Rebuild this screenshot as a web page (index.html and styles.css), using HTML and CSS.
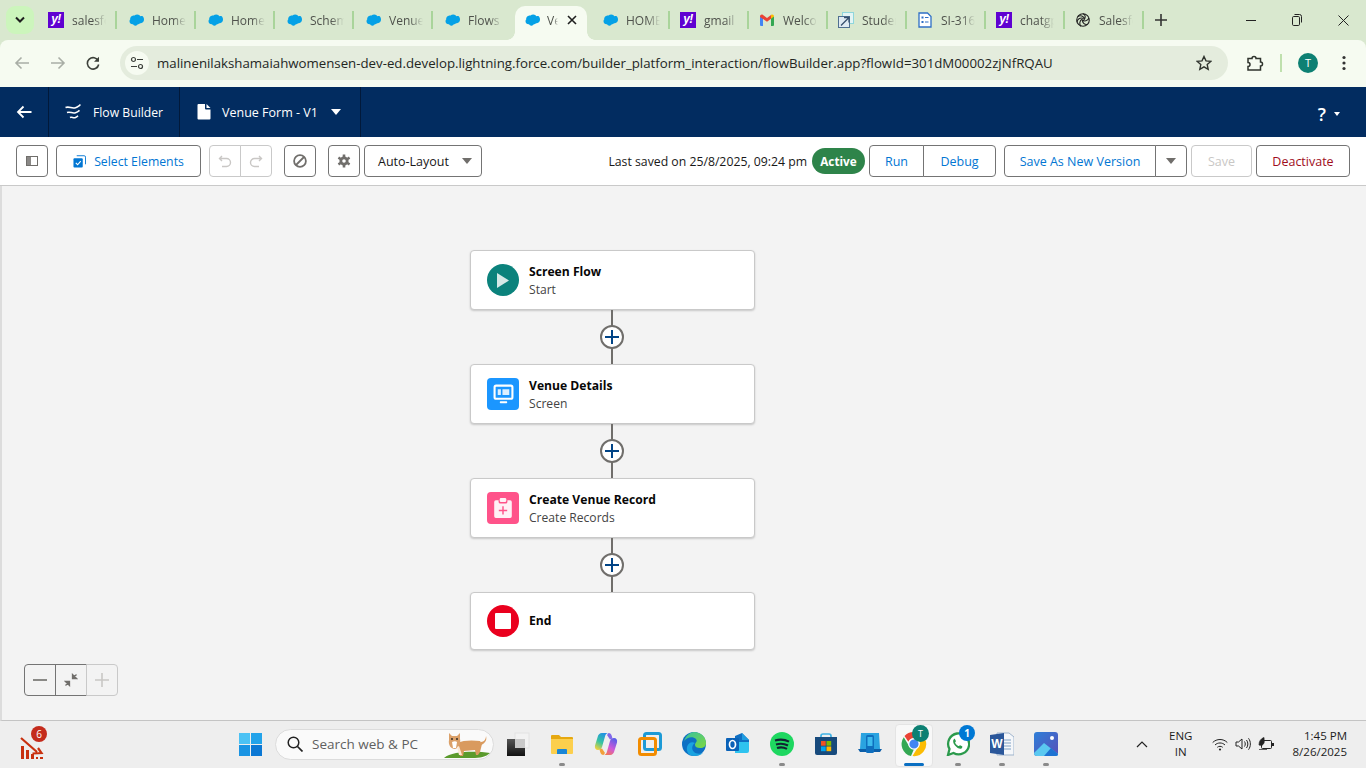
FILE: index.html
```html
<!DOCTYPE html>
<html lang="en">
<head>
<meta charset="utf-8">
<title>Flow Builder</title>
<link rel="stylesheet" href="styles.css">
</head>
<body>
<svg class="defs" width="0" height="0" aria-hidden="true">
  <symbol id="cloud" viewBox="0 0 16 12">
    <path fill="#05a1e6" d="M6.5 1.6C7.2.8 8.200.4 9.300.4c1.400 0 2.600.8 3.200 1.900.5-.2 1-.3 1.500-.3C15.200 2 16 4 16 5.600c0 2-1.200 3.600-3.200 3.600h-.8c-.5.800-1.400 1.200-2.200 1.100-.5 1-1.500 1.500-2.500 1.400-1 0-1.800-.6-2.300-1.400-1.800.2-3.500-1-3.500-3 0-.9.300-1.500.8-2C1.800 3.800 3.500 1.300 6.500 1.600z"/>
  </symbol>
  <symbol id="plus" viewBox="0 0 24 24">
    <circle cx="12" cy="12" r="11" fill="#fff" stroke="#706e6b" stroke-width="2"/>
    <path d="M12 5v14M5 12h14" stroke="#014486" stroke-width="2" fill="none"/>
  </symbol>
</svg>

<header class="tabstrip">
  <div class="tab-search"><svg width="12" height="8" viewBox="0 0 12 8"><path d="M2 1.500l4 4 4-4" fill="none" stroke="#1f1f1f" stroke-width="2"/></svg></div>
  <div class="tab"><span class="yahoo">y!</span><span class="tab-label">salesfo</span></div>
  <div class="tab"><svg class="fav cloud"><use href="#cloud"/></svg><span class="tab-label">Home</span></div>
  <div class="tab"><svg class="fav cloud"><use href="#cloud"/></svg><span class="tab-label">Home</span></div>
  <div class="tab"><svg class="fav cloud"><use href="#cloud"/></svg><span class="tab-label">Schem</span></div>
  <div class="tab"><svg class="fav cloud"><use href="#cloud"/></svg><span class="tab-label">Venue</span></div>
  <div class="tab no-sep"><svg class="fav cloud"><use href="#cloud"/></svg><span class="tab-label">Flows</span></div>
  <div class="tab active"><svg class="fav"><use href="#cloud"/></svg><span class="tab-label short">Ve</span>
    <svg class="tab-close" width="10" height="10" viewBox="0 0 10 10"><path d="M1 1l8 8M9 1l-8 8" stroke="#1f1f1f" stroke-width="1.600"/></svg></div>
  <div class="tab"><svg class="fav cloud"><use href="#cloud"/></svg><span class="tab-label">HOME</span></div>
  <div class="tab"><span class="yahoo">y!</span><span class="tab-label">gmail</span></div>
  <div class="tab">
    <svg class="fav" viewBox="0 0 16 16"><path fill="#4285f4" d="M1 4.500h3V14H2a1 1 0 0 1-1-1z"/><path fill="#34a853" d="M12 4.500h3V13a1 1 0 0 1-1 1h-2z"/><path fill="#ea4335" d="M1 4.500C1 3 2.500 2 3.700 2.800L8 6l4-3v3.800L8 9.800 1 5z"/><path fill="#fbbc04" d="M12 3l.6-.4C13.700 2 15 3 15 4.500L12 6.800z"/></svg>
    <span class="tab-label">Welco</span></div>
  <div class="tab">
    <svg class="fav" viewBox="0 0 16 16"><rect x="4.500" y=".5" width="11" height="11" fill="#e4f4f4" stroke="#8fd6dc"/><rect x=".5" y="4.500" width="11" height="11" fill="#dfeaf2" stroke="#4f6f90"/><path d="M3 13.500L11 5.500M6 5.500h5v5" fill="none" stroke="#36506e" stroke-width="1.300"/></svg>
    <span class="tab-label">Studer</span></div>
  <div class="tab">
    <svg class="fav" viewBox="0 0 16 16"><path d="M2 1h8.500L14 4.500V15H2z" fill="#fff" stroke="#2f6fc6" stroke-width="1.300"/><path d="M4.500 4.500h2v2h-2zM4.500 9h2v2h-2z" fill="#2f6fc6"/><path d="M8 5.500h3.500M8 10h3.500" stroke="#2f6fc6" stroke-width="1.200"/></svg>
    <span class="tab-label">SI-316</span></div>
  <div class="tab"><span class="yahoo">y!</span><span class="tab-label">chatgp</span></div>
  <div class="tab">
    <svg class="fav" viewBox="0 0 16 16"><g fill="none" stroke="#222" stroke-width="1.100"><circle cx="8" cy="8" r="6.300"/><path d="M8 1.700c3 1 3 5 0 7.300M14 6c-1 3-5 4-7 1.500M12.500 12.500c-3 .5-5.500-2-5-5M6 14.300c-2-2-1.500-5.500 1-7M2 10c.5-3 3.500-5 6.500-3.500M2.800 4.500c2.500-1.500 6-.5 6.700 2.500"/></g></svg>
    <span class="tab-label">Salesfo</span></div>
  <svg class="new-tab" width="12" height="12" viewBox="0 0 12 12"><path d="M6 0v12M0 6h12" stroke="#333" stroke-width="1.600"/></svg>
  <div class="win-controls">
    <span class="win-btn"><svg width="10" height="10" viewBox="0 0 10 10"><path d="M0 5.500h10" stroke="#222"/></svg></span>
    <span class="win-btn"><svg width="10" height="12" viewBox="0 0 10 12"><path d="M2.500.5h5a2 2 0 0 1 2 2v6" fill="none" stroke="#222"/><rect x=".5" y="2.500" width="7" height="9" rx="1.200" fill="none" stroke="#222"/></svg></span>
    <span class="win-btn"><svg width="11" height="11" viewBox="0 0 11 11"><path d="M.5.500l10 10M10.500.500l-10 10" stroke="#222"/></svg></span>
  </div>
</header>

<nav class="omnibar">
  <svg class="nav-ic" width="16" height="14" viewBox="0 0 16 14"><path d="M15 7H2M7.500 1.500L2 7l5.500 5.500" fill="none" stroke="#a9aea6" stroke-width="1.600"/></svg>
  <svg class="nav-ic" width="16" height="14" viewBox="0 0 16 14"><path d="M1 7h13M8.500 1.500L14 7l-5.500 5.500" fill="none" stroke="#a9aea6" stroke-width="1.600"/></svg>
  <svg class="nav-ic" width="14" height="14" viewBox="0 0 14 14"><path d="M12.300 5A5.700 5.700 0 1 0 12.700 8.500" fill="none" stroke="#3c403a" stroke-width="1.600"/><path d="M13 .8v5H8" fill="#3c403a"/></svg>
  <div class="urlbar">
    <span class="site-ic"><svg width="14" height="14" viewBox="0 0 14 14"><g fill="none" stroke="#3c403a" stroke-width="1.200"><circle cx="3.500" cy="3.500" r="2"/><path d="M7 3.500h6M1 10.500h6"/><circle cx="10.500" cy="10.500" r="2"/></g></svg></span>
    <span class="url">malinenilakshamaiahwomensen-dev-ed.develop.lightning.force.com/builder_platform_interaction/flowBuilder.app?flowId=301dM00002zjNfRQAU</span>
    <svg class="star" width="16" height="16" viewBox="0 0 16 16"><path d="M8 1.500l2 4.400 4.800.500-3.600 3.200 1 4.700L8 11.900l-4.200 2.400 1-4.700L1.200 6.400 6 5.900z" fill="none" stroke="#2f332d" stroke-width="1.400"/></svg>
  </div>
  <svg class="ext" width="18" height="18" viewBox="0 0 18 18"><path d="M2 4.500h4a2 2 0 0 1 4 0h4.500V8a2 2 0 0 1 0 4v4H2v-3.500a2 2 0 0 0 0-4z" fill="none" stroke="#2f332d" stroke-width="1.500"/></svg>
  <span class="omni-sep"></span>
  <span class="avatar">T</span>
  <svg class="menu-dots" width="4" height="16" viewBox="0 0 4 16"><circle cx="2" cy="2.500" r="1.600" fill="#333"/><circle cx="2" cy="8" r="1.600" fill="#333"/><circle cx="2" cy="13.500" r="1.600" fill="#333"/></svg>
</nav>

<section class="appbar">
  <div class="app-cell back"><svg width="16" height="14" viewBox="0 0 16 14"><path d="M15.500 7H2M7.500 1.500L2 7l5.500 5.500" fill="none" stroke="#fff" stroke-width="1.800"/></svg></div>
  <div class="app-cell builder">
    <svg width="16" height="16" viewBox="0 0 16 16"><path d="M.5 3.500c4-1.500 6 1.500 10 .2 2-.6 3.500-2 5-3M2 8.500c3.500-1.300 5 1.300 8.500.2 1.700-.5 3-1.500 4-2.400M5 13.500c2-1 3.300 1 5.500 0 1-.4 1.700-1 2.500-1.800" fill="none" stroke="#fff" stroke-width="1.600"/></svg>
    <span>Flow Builder</span>
  </div>
  <div class="app-cell doc">
    <svg width="14" height="16" viewBox="0 0 14 16"><path d="M1.500 0H8v4.500a1 1 0 0 0 1 1h4.500v9a1 1 0 0 1-1 1h-11a1 1 0 0 1-1-1V1a1 1 0 0 1 1-1zM9.500 0l4 4h-4z" fill="#fff"/></svg>
    <span>Venue Form - V1</span>
    <i class="caret white"></i>
  </div>
  <div class="help"><span class="q">?</span><i class="mini-caret"></i></div>
</section>

<section class="toolbar">
  <button class="btn icon"><svg width="12" height="10" viewBox="0 0 12 10"><rect x=".5" y=".5" width="11" height="9" fill="#fff" stroke="#706e6b"/><rect x="1" y="1" width="4" height="8" fill="#8a8886"/></svg></button>
  <button class="btn select">
    <svg width="13" height="13" viewBox="0 0 14 14"><path d="M4 .8h8a1.500 1.500 0 0 1 1.500 1.500v7.700" fill="none" stroke="#0176d3"/><rect x=".5" y="3.500" width="10" height="10" rx="1" fill="#0176d3"/><path d="M3 8.500l2 2 3.300-3.800" fill="none" stroke="#fff" stroke-width="1.200"/></svg>
    <span>Select Elements</span>
  </button>
  <div class="group undo">
    <button class="btn icon wide disabled"><svg width="14" height="14" viewBox="0 0 14 14"><path d="M4 2L1.500 4.500 4 7M2 4.500h6.500a4 4 0 0 1 0 8H4" fill="none" stroke="#c9c7c5" stroke-width="1.400"/></svg></button>
    <button class="btn icon wide disabled"><svg width="14" height="14" viewBox="0 0 14 14"><path d="M10 2l2.500 2.500L10 7M12 4.500H5.500a4 4 0 0 0 0 8H10" fill="none" stroke="#c9c7c5" stroke-width="1.400"/></svg></button>
  </div>
  <button class="btn icon stop"><svg width="14" height="14" viewBox="0 0 14 14"><circle cx="7" cy="7" r="5.900" fill="none" stroke="#706e6b" stroke-width="1.800"/><path d="M3 11l8-8" stroke="#706e6b" stroke-width="1.800"/></svg></button>
  <button class="btn icon gear"><svg width="14" height="14" viewBox="0 0 14 14"><circle cx="7" cy="7" r="3.200" fill="none" stroke="#706e6b" stroke-width="2.800"/><path d="M7 .5v2.500M7 11v2.500M1.400 3.700l2.200 1.300M10.400 9l2.200 1.300M1.400 10.300L3.600 9M10.400 5l2.200-1.300" stroke="#706e6b" stroke-width="2.600"/></svg></button>
  <button class="btn layout"><span>Auto-Layout</span><i class="caret grey"></i></button>
  <span class="saved">Last saved on 25/8/2025, 09:24 pm</span>
  <span class="status">Active</span>
  <div class="group run">
    <button class="btn brand run-b">Run</button>
    <button class="btn brand debug-b">Debug</button>
  </div>
  <div class="group saveas">
    <button class="btn brand saveas-b">Save As New Version</button>
    <button class="btn saveas-c"><i class="caret grey"></i></button>
  </div>
  <button class="btn disabled save-b">Save</button>
  <button class="btn deactivate">Deactivate</button>
</section>

<main class="canvas">
  <div class="flow">
    <article class="node">
      <span class="node-ic circle teal"><svg width="12" height="15" viewBox="0 0 12 15"><path d="M0 0l12 7.500L0 15z" fill="#d5e9e7"/></svg></span>
      <div><h3>Screen Flow</h3><p>Start</p></div>
    </article>
    <div class="link"><svg class="plus"><use href="#plus"/></svg></div>
    <article class="node">
      <span class="node-ic square blue"><svg width="21" height="21" viewBox="0 0 20 20"><rect x="1.500" y="1.500" width="17" height="12.500" rx="1.500" fill="none" stroke="#fff" stroke-width="2"/><path d="M4.500 5h3v5.500h-3zM9 5h6.500v5.500H9z" fill="#fff" opacity=".85"/><rect x="6.500" y="16.500" width="7" height="1.800" rx=".6" fill="#fff"/></svg></span>
      <div><h3>Venue Details</h3><p>Screen</p></div>
    </article>
    <div class="link"><svg class="plus"><use href="#plus"/></svg></div>
    <article class="node">
      <span class="node-ic square pink"><svg width="22" height="22" viewBox="0 0 20 20"><path d="M3.500 3H6v1.500a1.500 1.500 0 0 0 1.500 1.500h5A1.500 1.500 0 0 0 14 4.500V3h2.500A1.500 1.500 0 0 1 18 4.500v13a1.500 1.500 0 0 1-1.500 1.500h-13A1.500 1.500 0 0 1 2 17.500v-13A1.500 1.500 0 0 1 3.500 3z" fill="#fff" opacity=".92"/><rect x="7" y="1" width="6" height="3.500" rx="1.200" fill="#fff" opacity=".92"/><path d="M10 8.500v7.500M6.200 12.200h7.600" stroke="#ff538a" stroke-width="1.300"/></svg></span>
      <div><h3>Create Venue Record</h3><p>Create Records</p></div>
    </article>
    <div class="link"><svg class="plus"><use href="#plus"/></svg></div>
    <article class="node end">
      <span class="node-ic circle red"><span class="end-sq"></span></span>
      <div><h3>End</h3></div>
    </article>
  </div>
  <div class="zoom">
    <button class="z-btn"><svg width="14" height="2" viewBox="0 0 14 2"><path d="M0 1h14" stroke="#706e6b" stroke-width="1.600"/></svg></button>
    <button class="z-btn"><svg width="14" height="14" viewBox="0 0 14 14"><path d="M12.500 1.500L9 5M8.500 1.500v4h4z" fill="#706e6b" stroke="#706e6b" stroke-width="1.300"/><path d="M1.500 12.500L5 9M5.500 12.500v-4h-4z" fill="#706e6b" stroke="#706e6b" stroke-width="1.300"/></svg></button>
    <button class="z-btn off"><svg width="14" height="14" viewBox="0 0 14 14"><path d="M7 0v14M0 7h14" stroke="#c9c7c5" stroke-width="1.600"/></svg></button>
  </div>
</main>

<footer class="taskbar">
  <div class="widget">
    <svg width="24" height="24" viewBox="0 0 24 24"><path d="M1 11v13h3V11zM6 15v9h3v-9zM11 19v5h3v-5zM16 22v2h2v-2zM20 22v2h3v-2z" fill="#c8300f"/><path d="M1 3l16 14M12.500 18.500l9-.5-3.500-5" fill="none" stroke="#c8300f" stroke-width="2.200"/></svg>
    <span class="widget-badge">6</span>
  </div>
  <svg class="start" width="23" height="23" viewBox="0 0 23 23"><rect width="11" height="11" fill="#4cc2f4"/><rect x="12" width="11" height="11" fill="#22a3ea"/><rect y="12" width="11" height="11" fill="#1a94e3"/><rect x="12" y="12" width="11" height="11" fill="#0b78d4"/></svg>
  <div class="search">
    <svg width="16" height="16" viewBox="0 0 16 16"><circle cx="6.500" cy="6.500" r="5.300" fill="none" stroke="#222" stroke-width="1.500"/><path d="M10.500 10.500l5 5" stroke="#222" stroke-width="1.700"/></svg>
    <span>Search web &amp; PC</span>
    <svg class="dog" width="48" height="28" viewBox="0 0 48 28"><path d="M1 27c8-7 32-7 46-5-4 4-10 5-18 5z" fill="#5a9a2c"/><path d="M14 12c6-3 16-3 23-2l2 3-2 8-2 3h-2l-1-5-11 1-1 5h-3l-1-6z" fill="#d99a5e"/><path d="M38 11c3 0 5-3 5-6 1 3 0 7-5 9z" fill="#d99a5e"/><path d="M6 2l3 3h5l3-3 0 6c1 4-1 9-5 10-4 0-7-4-6-9z" fill="#dba16a"/><path d="M9 11c2-1 4-1 5 0l-1 6h-3z" fill="#fff"/><circle cx="9" cy="8" r=".9" fill="#222"/><circle cx="14" cy="8" r=".9" fill="#222"/><path d="M16 15l3 9h-3l-2-8z" fill="#fbe9d6"/></svg>
  </div>
  <div class="apps">
    <span class="app"><svg width="24" height="24" viewBox="0 0 24 24"><defs><linearGradient id="bk" x1="0" y1="0" x2="0" y2="1"><stop offset="0" stop-color="#555"/><stop offset="1" stop-color="#111"/></linearGradient></defs><rect x="9" y="1" width="14" height="15" fill="#f2f2f2" stroke="#e2e2e2"/><rect x="1" y="7" width="18" height="17" fill="url(#bk)"/><rect x="9" y="7" width="10" height="9" fill="#c8c8c8"/></svg></span>
    <span class="app dot"><svg width="24" height="24" viewBox="0 0 24 24"><path d="M1 4a1 1 0 0 1 1-1h7l2 2h11a1 1 0 0 1 1 1v2H1z" fill="#e6a810"/><path d="M1 7h22v14a1 1 0 0 1-1 1H2a1 1 0 0 1-1-1z" fill="#fccf4d"/><path d="M8 17h8a1 1 0 0 1 1 1v4H7v-4a1 1 0 0 1 1-1z" fill="#1a86d6"/></svg></span>
    <span class="app"><svg width="24" height="24" viewBox="0 0 24 24"><defs><linearGradient id="cl" x1="0.700" y1="0" x2="0.200" y2="1"><stop offset="0" stop-color="#1f8fe8"/><stop offset=".55" stop-color="#37c4a0"/><stop offset="1" stop-color="#f6d23a"/></linearGradient><linearGradient id="cr" x1="0.700" y1="0" x2="0.200" y2="1"><stop offset="0" stop-color="#5a5ee8"/><stop offset=".55" stop-color="#d05ad8"/><stop offset="1" stop-color="#f5784a"/></linearGradient></defs><path d="M8 1h6.500c-2 0-3 1.500-3.500 3.500L8 15c-.6 2-2 3-4 3-2.300 0-3.600-2-3-4.500l2.500-8C4.200 2.700 5.500 1 8 1z" fill="url(#cl)"/><path d="M16 23H9.500c2 0 3-1.500 3.500-3.500L16 9c.6-2 2-3 4-3 2.300 0 3.600 2 3 4.500l-2.500 8C19.800 21.300 18.500 23 16 23z" fill="url(#cr)"/><path d="M14.500 1c1.800 0 2.800 1 3.300 3l.7 2.500-2.500 1L13 3z" fill="#8268ea"/><path d="M9.500 23c-1.800 0-2.800-1-3.300-3l-.7-2.500 2.500-1L11 21z" fill="#f2a03a"/></svg></span>
    <span class="app"><svg width="24" height="24" viewBox="0 0 24 24"><rect x="6.500" y="1.500" width="16" height="16" rx="2" fill="none" stroke="#1c9ad6" stroke-width="3"/><rect x="1.500" y="6.500" width="16" height="16" rx="2" fill="none" stroke="#f28c00" stroke-width="3"/></svg></span>
    <span class="app"><svg width="24" height="24" viewBox="0 0 24 24"><defs><linearGradient id="ed" x1="0" y1="0" x2="1" y2="1"><stop offset="0" stop-color="#35c1a0"/><stop offset="1" stop-color="#7fd83f"/></linearGradient></defs><circle cx="12" cy="12" r="12" fill="#0d70c4"/><path d="M2 9C4 3 9 0 12 0c7 0 12 5 12 11 0 3-2 5-6 5-3 0-5-1-5-3 0-3 3-3 1-6-3-3-9-2-12 2z" fill="url(#ed)"/><path d="M12 24c-5 0-8-4-7-9 1-4 5-6 8-4-3 2-4 6-1 9 2 2 6 2 9 1-2 2-5 3-9 3z" fill="#1aa3e0"/></svg></span>
    <span class="app"><svg width="24" height="24" viewBox="0 0 24 24"><path d="M9 4l7-3 7 7v9l-3 4H9z" fill="#0f6fc2"/><path d="M9 10h14v9a2 2 0 0 1-2 2H9z" fill="#2ec3ef"/><path d="M16 1l7 7h-7z" fill="#1f9ce0"/><rect x="0" y="6" width="13" height="13" rx="1" fill="#0a62b8"/><ellipse cx="6.500" cy="12.500" rx="3" ry="4" fill="none" stroke="#fff" stroke-width="1.700"/></svg></span>
    <span class="app dot"><svg width="24" height="24" viewBox="0 0 24 24"><circle cx="12" cy="12" r="12" fill="#1ed760"/><path d="M5 8.500c5-1.500 10-1 14 1.200M6 12.500c4-1.200 8.500-.8 12 1M7 16c3-1 7-.7 10 .9" fill="none" stroke="#123" stroke-width="2.100"/></svg></span>
    <span class="app"><svg width="24" height="24" viewBox="0 0 24 24"><path d="M7 6V4a2 2 0 0 1 2-2h6a2 2 0 0 1 2 2v2" fill="none" stroke="#3eb2e5" stroke-width="1.700"/><path d="M1 5h22v16a2 2 0 0 1-2 2H3a2 2 0 0 1-2-2z" fill="#174a7c"/><rect x="7" y="9" width="4.700" height="4.700" fill="#f25022"/><rect x="12.500" y="9" width="4.700" height="4.700" fill="#7fba00"/><rect x="7" y="14.500" width="4.700" height="4.700" fill="#00a4ef"/><rect x="12.500" y="14.500" width="4.700" height="4.700" fill="#ffb900"/></svg></span>
    <span class="app"><svg width="24" height="24" viewBox="0 0 24 24"><path d="M3 1h18l1 16H2z" fill="#2aa3e0"/><path d="M0 17h24l-2 3H2z" fill="#0c5ea8"/><rect x="8" y="3" width="8" height="18" rx="1.500" fill="#0f6fbe"/><rect x="9.500" y="5" width="5" height="9" fill="#3dbbee"/></svg></span>
    <span class="app current"><svg width="26" height="26" viewBox="0 0 26 26"><path d="M13 1a12 12 0 0 1 10.400 6H13a6 6 0 0 0-5.600 3.700L3.500 5A12 12 0 0 1 13 1z" fill="#ea4335"/><path d="M2.800 6.300L8 15a6 6 0 0 0 5 3l-3 7A12 12 0 0 1 2.800 6.300z" fill="#34a853"/><path d="M24 8a12 12 0 0 1-12.500 17L17 16a6 6 0 0 0 .5-8z" fill="#fbbc04"/><circle cx="13" cy="13" r="5.200" fill="#4285f4" stroke="#fff" stroke-width="1.200"/></svg><span class="t-badge">T</span><span class="run-bar"></span></span>
    <span class="app dot"><svg width="24" height="24" viewBox="0 0 24 24"><path d="M2 23l1.500-6A10.500 10.500 0 1 1 7.500 21z" fill="#fff" stroke="#2b9a4c" stroke-width="2.300"/><path d="M8 7c-1.500 1.500-1 4 1 6.500s5 4 6.500 3c1-1 1-2 .6-2.300l-2-1c-.5-.2-1 .8-1.500.8-1 0-3.500-2.500-3.500-3.500 0-.5 1-1 .8-1.500l-1-2C8.700 6.500 8.400 6.600 8 7z" fill="#2b9a4c"/></svg><span class="wa-badge">1</span></span>
    <span class="app dot"><svg width="24" height="24" viewBox="0 0 24 24"><path d="M7 1h12l5 4v18H7z" fill="#f5f7fa" stroke="#9fb4cc"/><path d="M14 8h7M14 11h7M14 14h7M14 17h7" stroke="#7fa0c4"/><path d="M0 3l14-2v22L0 21z" fill="#2b579a"/><text class="word-w" x="7" y="16" text-anchor="middle">W</text></svg></span>
    <span class="app dot"><svg width="24" height="24" viewBox="0 0 24 24"><defs><linearGradient id="ph" x1="0" y1="0" x2="1" y2="1"><stop offset="0" stop-color="#2d7fd8"/><stop offset="1" stop-color="#5a4fb8"/></linearGradient></defs><rect width="24" height="24" rx="3" fill="url(#ph)"/><circle cx="18" cy="6" r="2" fill="#fff"/><path d="M0 21l10-10 14 11a2 2 0 0 1-2 2H3a3 3 0 0 1-3-3z" fill="#5ac8f0"/><path d="M10 24l7-8 7 6a2 2 0 0 1-2 2z" fill="#1d72d2"/></svg></span>
  </div>
  <div class="tray">
    <svg class="chev" width="12" height="7" viewBox="0 0 12 7"><path d="M1 6l5-5 5 5" fill="none" stroke="#222" stroke-width="1.200"/></svg>
    <div class="lang"><span>ENG</span><span>IN</span></div>
    <svg width="16" height="13" viewBox="0 0 16 13"><g fill="none" stroke="#222"><path d="M.7 4.500C4.700.5 11.300.5 15.300 4.500M3 7c2.700-2.700 7.300-2.700 10 0M5.300 9.300c1.500-1.300 3.900-1.300 5.400 0"/></g><circle cx="8" cy="11.500" r="1.100" fill="#222"/></svg>
    <svg width="16" height="14" viewBox="0 0 16 14"><g fill="none" stroke="#222"><path d="M1 5h2.500L7 2v10L3.500 9H1zM9.500 4.500c1 1.500 1 3.500 0 5M11.500 3c1.800 2.300 1.800 5.700 0 8M13.500 1.300c2.500 3.300 2.500 8 0 11.400"/></g></svg>
    <svg width="17" height="14" viewBox="0 0 17 14"><rect x="3.500" y="3.500" width="10" height="8" rx="1" fill="none" stroke="#222"/><path d="M14 6h2v3h-2z" fill="#222"/><path d="M1 8c0-4 2-6.500 5-7.500 0 3 1 5-1 7-1 1-2 1-4 .5zM1 12.500h8" fill="#222" stroke="#222" stroke-width=".7"/></svg>
    <div class="clock"><span>1:45 PM</span><span>8/26/2025</span></div>
  </div>
</footer>
</body>
</html>
```
FILE: styles.css
```css
* { box-sizing: border-box; }
html, body { margin: 0; padding: 0; }
body {
  width: 1366px; height: 768px; overflow: hidden;
  display: flex; flex-direction: column;
  font-family: "Open Sans", "Noto Sans", sans-serif;
  background: #d9e8cf;
}
.defs { position: absolute; }
button { font: inherit; background: #fff; padding: 0; }

/* Browser tabs */
.tabstrip {
  height: 40px; flex: none; display: flex; align-items: center;
  background: #d9e8cf; padding-left: 6px;
}
.tab-search {
  width: 28px; height: 28px; margin-right: 4px; flex: none;
  background: #ccf5bc; border-radius: 9px;
  display: flex; align-items: center; justify-content: center;
}
.tab {
  width: 79px; height: 40px; flex: none; padding: 0 0 0 10px;
  display: flex; align-items: center; gap: 8px; position: relative;
}
.tab::after {
  content: ""; position: absolute; right: 0; top: 11px; width: 2px; height: 18px; background: #a9d49a;
}
.tab.no-sep::after { display: none; }
.tab.active {
  background: #f6fbf1; border-radius: 10px 10px 0 0; margin-top: 6px; height: 34px;
  padding: 0 0 6px 9px; gap: 7px; width: 72px; margin-left: 3px; margin-right: 4px;
}
.tab.active::before, .tab.active::after {
  content: ""; position: absolute; bottom: 0; top: auto; width: 8px; height: 8px;
}
.tab.active::before { left: -8px; background: radial-gradient(circle at 0 0, transparent 7.500px, #f6fbf1 8px); }
.tab.active::after { right: -8px; background: radial-gradient(circle at 100% 0, transparent 7.500px, #f6fbf1 8px); }
.fav { width: 16px; height: 16px; flex: none; }
.fav.cloud { height: 12px; margin-left: 1px; }
.tab.active .fav { height: 12px; }
.yahoo {
  width: 16px; height: 16px; flex: none; background: #5f01d1; color: #fff;
  font: italic bold 12px/15px "Liberation Sans", sans-serif; text-align: center; letter-spacing: -.5px;
}
.tab-label {
  width: 34px; font-size: 12px; color: #4f524c; white-space: nowrap;
  -webkit-mask-image: linear-gradient(90deg, #000 62%, transparent);
  mask-image: linear-gradient(90deg, #000 62%, transparent);
}
.tab-label.short { width: 11px; }
.tab-close { position: absolute; left: 52px; top: 9px; }
.new-tab { margin-left: 11px; flex: none; }
.win-controls { margin-left: auto; width: 138px; flex: none; display: flex; }
.win-btn { width: 46px; display: flex; align-items: center; justify-content: center; }

/* Address row */
.omnibar {
  height: 47px; flex: none; background: #f6fbf1; display: flex; align-items: center;
  padding: 0 0 1px 14px; border-radius: 8px 8px 0 0;
}
.nav-ic { margin-right: 20px; flex: none; }
.urlbar {
  width: 1108px; height: 34px; background: #e4ecdd; border-radius: 17px;
  display: flex; align-items: center; padding-left: 5px; flex: none;
}
.site-ic {
  width: 24px; height: 24px; border-radius: 50%; background: #f6fbf1;
  display: flex; align-items: center; justify-content: center; flex: none;
}
.url { margin-left: 8px; font-size: 13.260px; color: #23261f; white-space: nowrap; flex: none; }
.star { margin-left: auto; margin-right: 16px; }
.ext { margin-left: 18px; flex: none; }
.omni-sep { width: 2px; height: 18px; background: #bfe0ae; margin-left: 16px; flex: none; }
.avatar {
  width: 20px; height: 20px; border-radius: 50%; background: #0d8073; color: #fff; flex: none;
  font-size: 11px; line-height: 20px; text-align: center; margin-left: 16px;
}
.menu-dots { margin-left: 24px; flex: none; }

/* Flow Builder header */
.appbar {
  height: 50px; flex: none; background: #022c60; color: #fff; display: flex; align-items: stretch;
  font-size: 12.500px;
}
.app-cell {
  display: flex; align-items: center; border-right: 1px solid #01193a; flex: none;
}
.back { width: 49px; padding-left: 16px; }
.builder { width: 131px; padding-left: 16px; gap: 12px; font-size: 12.200px; }
.doc { width: 181px; padding-left: 17px; gap: 11px; }
.caret { width: 0; height: 0; border: 5.500px solid transparent; border-bottom: 0; border-top-width: 6px; }
.caret.white { border-top-color: #fff; margin-left: 2px; }
.caret.grey { border-top-color: #706e6b; }
.help { margin-left: auto; display: flex; align-items: center; padding: 4px 26px 0 0; gap: 8px; }
.q { font-size: 18px; font-weight: 600; }
.mini-caret { width: 0; height: 0; border: 3px solid transparent; border-top: 4px solid #fff; border-bottom: 0; }

/* Builder toolbar */
.toolbar {
  height: 49px; flex: none; background: #fff; border-bottom: 1px solid #c9c9c9;
  display: flex; align-items: center; padding: 0 16px; font-size: 12.500px;
}
.btn {
  height: 32px; border: 1px solid #747474; border-radius: 4px; color: #181818;
  display: flex; align-items: center; justify-content: center; flex: none;
}
.btn.icon { width: 32px; }
.btn.select { width: 145px; margin-left: 8px; gap: 8px; color: #0176d3; font-size: 12.250px; }
.group { display: flex; flex: none; }
.group .btn + .btn { margin-left: -1px; border-top-left-radius: 0; border-bottom-left-radius: 0; }
.group .btn:first-child { border-top-right-radius: 0; border-bottom-right-radius: 0; }
.undo { margin-left: 8px; }
.btn.wide { width: 32px; }
.btn.disabled { border-color: #c9c9c9; color: #c9c7c5; }
.btn.stop { margin-left: 12px; }
.btn.gear { margin-left: 12px; }
.btn.layout { width: 118px; margin-left: 4px; justify-content: space-between; padding: 0 9px 0 13px; }
.saved { margin-left: auto; color: #181818; white-space: nowrap; font-size: 12.250px; }
.status {
  width: 53px; height: 26px; border-radius: 13px; background: #2e844a; color: #fff;
  font-weight: 700; font-size: 11.750px; text-align: center; line-height: 26px; margin-left: 5px; flex: none;
}
.brand { color: #0176d3; }
.run { margin-left: 4px; }
.run-b { width: 55px; }
.debug-b { width: 73px; }
.saveas { margin-left: 8px; }
.saveas-b { width: 152px; }
.saveas-c { width: 32px; }
.save-b { width: 61px; margin-left: 4px; }
.deactivate { width: 94px; margin-left: 4px; color: #a00d1c; }

/* Canvas */
.canvas {
  flex: 1; min-height: 0; position: relative; background: #f3f3f3;
  border-left: 2px solid #dcdcdc; border-bottom: 1px solid #c4c4c4;
  padding: 64px 0 0 468px;
}
.flow { display: flex; flex-direction: column; width: 285px; }
.node {
  height: 60px; background: #fff; border: 1px solid #c9c9c9; border-radius: 4px;
  box-shadow: 0 1px 2px rgba(0,0,0,.18);
  display: flex; align-items: center; gap: 10px; padding-left: 16px;
}
.node.end { height: 58px; }
.node h3 { margin: 2px 0 0; font-size: 12.150px; line-height: 18px; font-weight: 700; color: #080707; }
.node.end h3 { margin-top: 0; }
.node p { margin: 0; font-size: 12.100px; line-height: 18px; color: #444; }
.node-ic {
  width: 32px; height: 32px; flex: none; display: flex; align-items: center; justify-content: center;
}
.circle { border-radius: 50%; }
.square { border-radius: 4px; }
.teal { background: #0b827c; }
.blue { background: #1b96ff; }
.pink { background: #ff538a; }
.red { background: #ea001e; }
.end-sq { width: 16px; height: 16px; background: #fff; border-radius: 1px; }
.link {
  height: 54px; display: flex; align-items: center; justify-content: center;
  background: linear-gradient(#706e6b, #706e6b) center / 2px 100% no-repeat;
  margin-right: 1px;
}
.plus { width: 24px; height: 24px; display: block; }

.zoom {
  position: absolute; left: 22px; bottom: 24px; display: flex;
}
.z-btn {
  width: 32px; height: 32px; border: 1px solid #747474; background: #f3f3f3; margin-right: -1px;
  display: flex; align-items: center; justify-content: center;
}
.z-btn:first-child { border-radius: 4px 0 0 4px; }
.z-btn.off { border-color: #c9c9c9; border-radius: 0 4px 4px 0; }

/* Windows taskbar */
.taskbar {
  height: 47px; flex: none; background: #eeeeee; display: flex; align-items: center; position: relative;
  padding-bottom: 1px;
}
.widget { width: 30px; height: 30px; margin-left: 20px; position: relative; display: flex; align-items: flex-end; flex: none; }
.widget-badge {
  position: absolute; left: 11px; top: -3px; width: 16px; height: 16px; border-radius: 50%;
  background: #c42b1c; color: #fff; font-size: 10px; line-height: 16px; text-align: center;
}
.start { margin-left: 189px; flex: none; }
.search {
  width: 219px; height: 31px; margin-left: 13px; background: #fafafa; border: 1px solid #dcdcdc;
  border-radius: 16px; display: flex; align-items: center; padding-left: 11px; gap: 9px; flex: none;
  font-size: 13.500px; color: #5f5f5f; position: relative;
}
.dog { position: absolute; right: 2px; top: 1px; }
.apps { display: flex; margin-left: 2px; flex: none; }
.app {
  width: 44px; height: 46px; display: flex; align-items: center; justify-content: center; position: relative; flex: none;
}
.app.dot::after {
  content: ""; position: absolute; bottom: 1px; left: 19px; width: 6px; height: 3px; border-radius: 2px; background: #8a8a8a;
}
.app.current::before {
  content: ""; position: absolute; left: 3px; right: 3px; top: 3px; bottom: 0;
  background: #f8f8f8; border: 1px solid #e4e4e4; border-radius: 4px;
}
.app.current svg { position: relative; }
.t-badge {
  position: absolute; left: 20px; top: 4px; width: 17px; height: 17px; border-radius: 50%; background: #0d8073;
  color: #fff; font-size: 9px; line-height: 17px; text-align: center;
}
.run-bar { position: absolute; bottom: 1px; left: 12px; width: 20px; height: 3px; border-radius: 2px; background: #0a6fc2; }
.wa-badge {
  position: absolute; left: 23px; top: 4px; width: 16px; height: 16px; border-radius: 50%; background: #0078d4;
  color: #fff; font-size: 10px; font-weight: 700; line-height: 16px; text-align: center;
}
.word-w { font: bold 12px "Liberation Sans", sans-serif; fill: #fff; }
.tray {
  flex: 1; display: flex; align-items: center; font-size: 11.500px; color: #1c1c1c; min-width: 0;
}
.chev { margin-left: 68px; flex: none; }
.lang { display: flex; flex-direction: column; align-items: center; margin-left: 21px; margin-right: 20px; line-height: 16px; }
.tray > svg + svg { margin-left: 7px; }
.clock { display: flex; flex-direction: column; align-items: flex-end; margin-left: auto; margin-right: 19px; line-height: 16px; }
```
